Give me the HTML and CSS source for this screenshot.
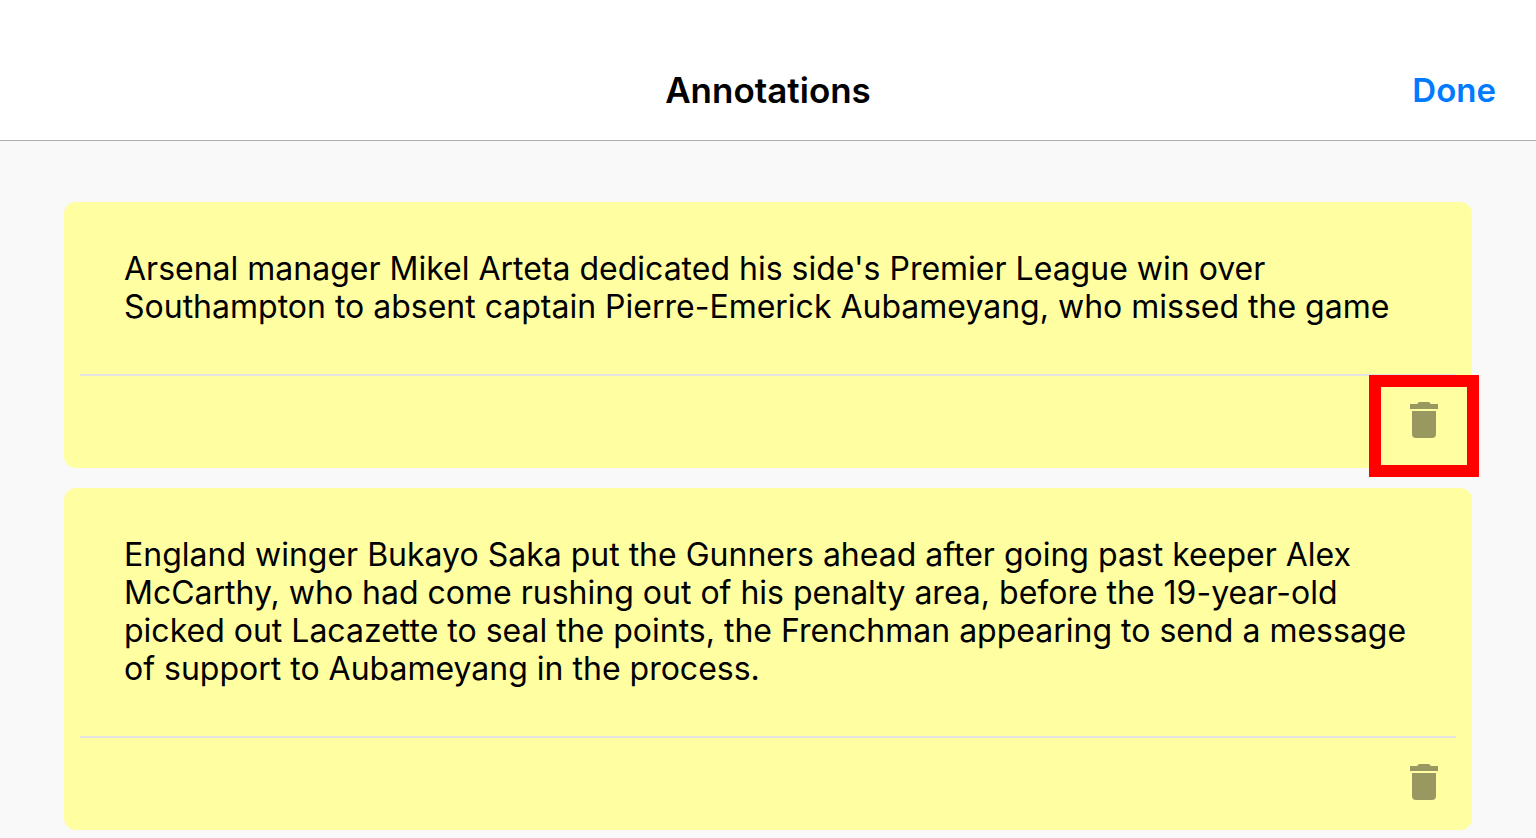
FILE: index.html
```html
<!DOCTYPE html>
<html lang="en">
<head>
    <meta charset="UTF-8">
    <meta name="viewport" content="width=device-width, initial-scale=1.0">
    <title>Annotations</title>
    <link rel="stylesheet" href="styles.css">
</head>
<body>
    <header class="header">
        <h1>Annotations</h1>
        <button type="button" class="done-btn">Done</button>
    </header>

    <main class="annotations">
        <article class="card">
            <p class="card-text">Arsenal manager Mikel Arteta dedicated his side's Premier League win over Southampton to absent captain Pierre-Emerick Aubameyang, who missed the game</p>
            <div class="card-actions">
                <button type="button" class="delete-btn highlighted" aria-label="Delete annotation">
                    <svg viewBox="0 0 28 36" aria-hidden="true">
                        <path d="M2 9h24v23a4 4 0 0 1-4 4H6a4 4 0 0 1-4-4zM0 2h7l2-2h10l2 2h7v5H0z"/>
                    </svg>
                </button>
            </div>
        </article>

        <article class="card">
            <p class="card-text">England winger Bukayo Saka put the Gunners ahead after going past keeper Alex McCarthy, who had come rushing out of his penalty area, before the 19-year-old picked out Lacazette to seal the points, the Frenchman appearing to send a message of support to Aubameyang in the process.</p>
            <div class="card-actions">
                <button type="button" class="delete-btn" aria-label="Delete annotation">
                    <svg viewBox="0 0 28 36" aria-hidden="true">
                        <path d="M2 9h24v23a4 4 0 0 1-4 4H6a4 4 0 0 1-4-4zM0 2h7l2-2h10l2 2h7v5H0z"/>
                    </svg>
                </button>
            </div>
        </article>
    </main>
</body>
</html>
```

FILE: styles.css
```css
* {
    box-sizing: border-box;
}

body {
    margin: 0;
    font-family: Inter, "Liberation Sans", sans-serif;
    background-color: #f9f9f9;
    color: #000;
}

.header {
    display: grid;
    grid-template-columns: 1fr auto 1fr;
    align-items: center;
    padding: 60px 40px 20px;
    background-color: #fff;
    border-bottom: 1px solid #adadad;
}

.header h1 {
    grid-column: 2;
    margin: 0;
    font-size: 35px;
    font-weight: 600;
    line-height: 60px;
}

.done-btn {
    justify-self: end;
    padding: 0;
    border: none;
    background: none;
    color: #007aff;
    font-family: inherit;
    font-size: 33px;
    font-weight: 600;
    line-height: 60px;
    cursor: pointer;
}

.annotations {
    display: flex;
    flex-direction: column;
    gap: 20px;
    padding: 61px 64px 8px;
}

.card {
    padding: 0 16px;
    background-color: #fffea1;
    border-radius: 12px;
}

.card-text {
    margin: 0;
    padding: 48px 44px;
    font-size: 32px;
    line-height: 38px;
}

.card-actions {
    display: flex;
    justify-content: flex-end;
    height: 94px;
    border-top: 2px solid #e4e4e4;
}

.delete-btn {
    position: relative;
    width: 64px;
    height: 88px;
    padding: 0;
    border: none;
    background: none;
    cursor: pointer;
}

.delete-btn svg {
    display: block;
    width: 28px;
    height: 36px;
    margin: 0 auto;
    fill: #999861;
}

/* red frame round the button */
.highlighted::after {
    content: "";
    position: absolute;
    top: -1px;
    left: -23px;
    box-sizing: border-box;
    width: 110px;
    height: 102px;
    border: 12px solid #f00;
}
```
